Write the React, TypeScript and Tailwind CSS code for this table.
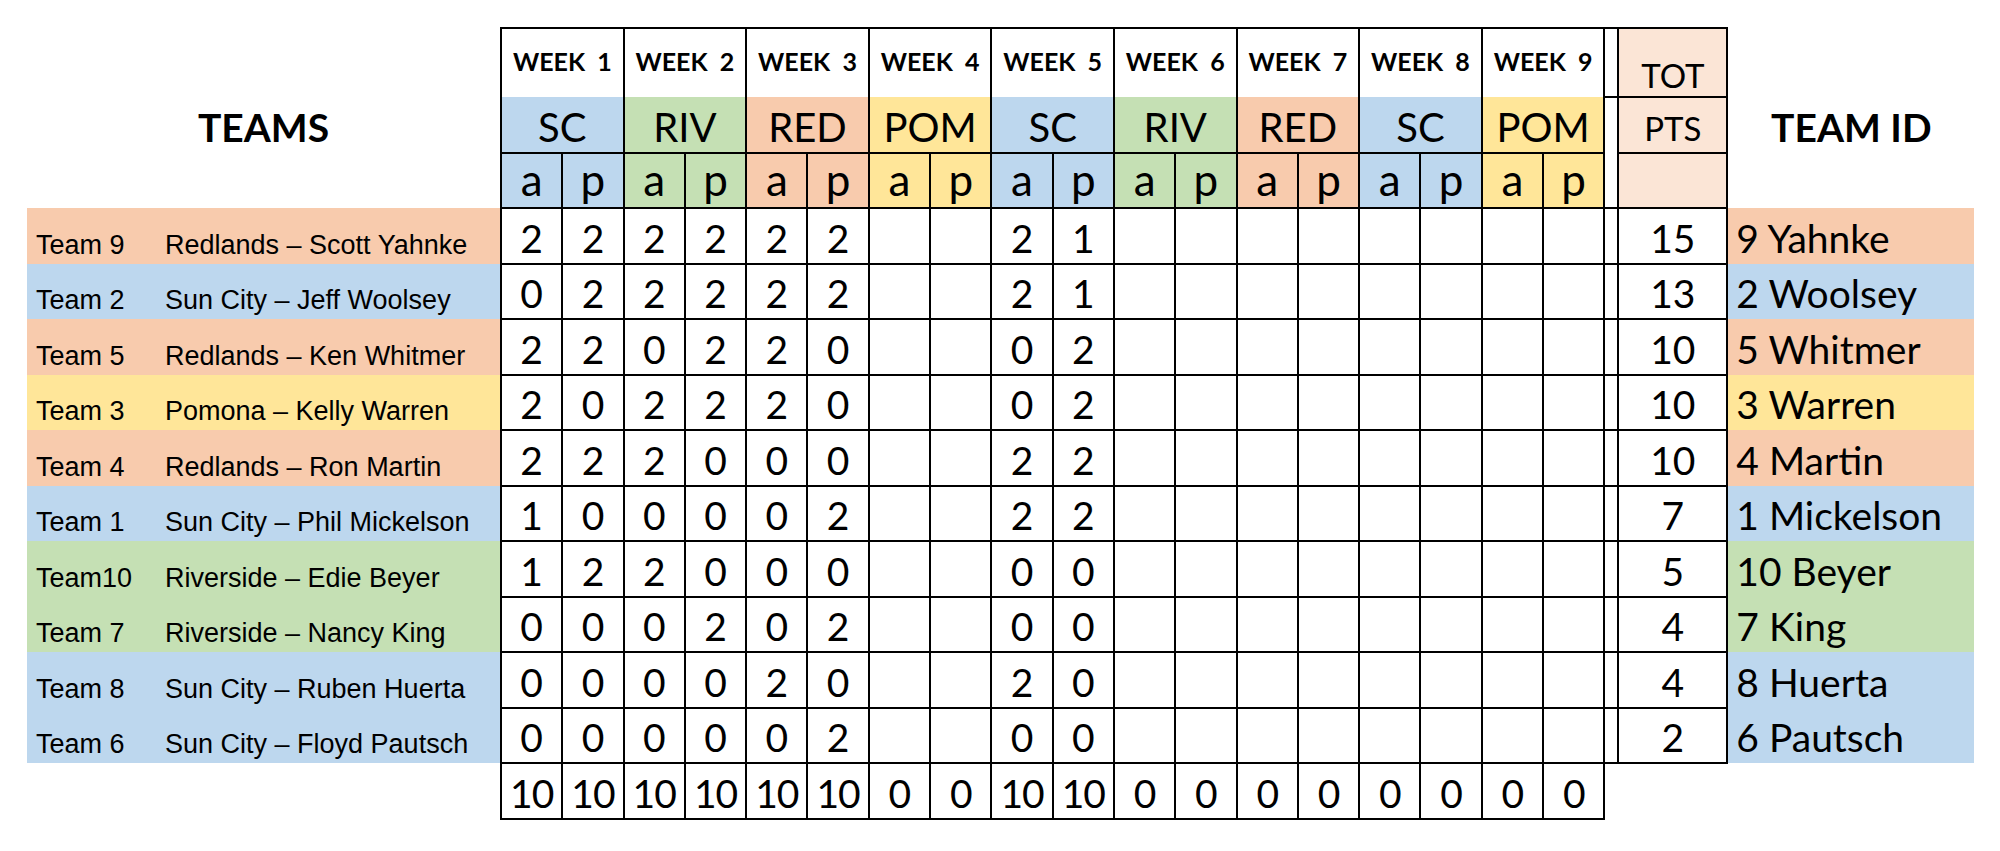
const FILL: Record<string, string> = {
  RED: "bg-[#f8cbad]",
  SC: "bg-[#bdd7ee]",
  RIV: "bg-[#c5e0b4]",
  POM: "bg-[#ffe699]",
};

const weeks = ["SC", "RIV", "RED", "POM", "SC", "RIV", "RED", "SC", "POM"];

const teams = [
  { id: "Team 9", name: "Redlands – Scott Yahnke", club: "RED", scores: "2 2 2 2 2 2 _ _ 2 1", tot: 15, short: "9 Yahnke" },
  { id: "Team 2", name: "Sun City – Jeff Woolsey", club: "SC", scores: "0 2 2 2 2 2 _ _ 2 1", tot: 13, short: "2 Woolsey" },
  { id: "Team 5", name: "Redlands – Ken Whitmer", club: "RED", scores: "2 2 0 2 2 0 _ _ 0 2", tot: 10, short: "5 Whitmer" },
  { id: "Team 3", name: "Pomona – Kelly Warren", club: "POM", scores: "2 0 2 2 2 0 _ _ 0 2", tot: 10, short: "3 Warren" },
  { id: "Team 4", name: "Redlands – Ron Martin", club: "RED", scores: "2 2 2 0 0 0 _ _ 2 2", tot: 10, short: "4 Martin" },
  { id: "Team 1", name: "Sun City – Phil Mickelson", club: "SC", scores: "1 0 0 0 0 2 _ _ 2 2", tot: 7, short: "1 Mickelson" },
  { id: "Team10", name: "Riverside – Edie Beyer", club: "RIV", scores: "1 2 2 0 0 0 _ _ 0 0", tot: 5, short: "10 Beyer" },
  { id: "Team 7", name: "Riverside – Nancy King", club: "RIV", scores: "0 0 0 2 0 2 _ _ 0 0", tot: 4, short: "7 King" },
  { id: "Team 8", name: "Sun City – Ruben Huerta", club: "SC", scores: "0 0 0 0 2 0 _ _ 2 0", tot: 4, short: "8 Huerta" },
  { id: "Team 6", name: "Sun City – Floyd Pautsch", club: "SC", scores: "0 0 0 0 0 2 _ _ 0 0", tot: 2, short: "6 Pautsch" },
];

const totals = ["10", "10", "10", "10", "10", "10", "0", "0", "10", "10", "0", "0", "0", "0", "0", "0", "0", "0"];

function cells(scores: string) {
  const list = scores.split(" ").map((s) => (s === "_" ? "" : s));
  while (list.length < 18) list.push("");
  return list;
}

const calibri = "font-['Lato',sans-serif]";
const arial = "font-['Liberation_Sans',Arial,sans-serif]";

export default function App() {
  return (
    <div className="min-h-[851px] w-[2000px] bg-white text-black">
      <table className={`ml-[27px] mt-[27px] table-fixed border-collapse ${calibri}`}>
        <colgroup>
          <col className="w-[474px]" />
          {Array.from({ length: 18 }).map((_, i) => (
            <col key={i} className="w-[61.3px]" />
          ))}
          <col className="w-[14px]" />
          <col className="w-[109px]" />
          <col className="w-[247px]" />
        </colgroup>
        <tbody>
          {/* Week titles */}
          <tr>
            <td rowSpan={3} className="pt-[18px] text-center align-middle text-[39px] font-bold leading-none">
              TEAMS
            </td>
            {weeks.map((_, i) => (
              <td
                key={i}
                colSpan={2}
                className="h-[69px] whitespace-pre border-x-2 border-t-2 border-black pb-[3px] text-center align-middle text-[25px] font-bold leading-none"
              >
                {`WEEK  ${i + 1}`}
              </td>
            ))}
            <td className="border-2 border-black" />
            <td className="border-2 border-black bg-[#fbe5d6] pb-[4px] text-center align-bottom text-[33px] leading-none">
              TOT
            </td>
            <td rowSpan={3} className="pt-[18px] text-center align-middle text-[39px] font-bold leading-none">
              TEAM ID
            </td>
          </tr>

          {/* Opponent clubs */}
          <tr>
            {weeks.map((w, i) => (
              <td
                key={i}
                colSpan={2}
                className={`h-[56px] border-x-2 border-b-2 border-black pt-[5px] text-center align-middle text-[40px] leading-none ${FILL[w]}`}
              >
                {w}
              </td>
            ))}
            <td className="border-x-2 border-black" />
            <td className="border-2 border-black bg-[#fbe5d6] pt-[7px] text-center align-middle text-[33px] leading-none">
              PTS
            </td>
          </tr>

          {/* a / p */}
          <tr>
            {weeks.flatMap((w, i) =>
              ["a", "p"].map((s) => (
                <td
                  key={`${i}${s}`}
                  className={`h-[55px] border-2 border-black pb-[4px] text-center align-middle text-[44px] leading-none ${FILL[w]}`}
                >
                  {s}
                </td>
              ))
            )}
            <td className="border-x-2 border-black" />
            <td className="border-2 border-black bg-[#fbe5d6]" />
          </tr>

          {teams.map((t) => (
            <tr key={t.id}>
              <td className={`h-[55.5px] align-bottom pb-[5px] pl-[9px] text-[27px] leading-none ${arial} ${FILL[t.club]}`}>
                <div className="flex">
                  <span className="w-[129px]">{t.id}</span>
                  <span>{t.name}</span>
                </div>
              </td>
              {cells(t.scores).map((s, i) => (
                <td key={i} className="border-2 border-black pt-[5px] text-center align-middle text-[39px] leading-none">
                  {s}
                </td>
              ))}
              <td className="border-2 border-black" />
              <td className="border-2 border-black pt-[5px] text-center align-middle text-[39px] leading-none">
                {t.tot}
              </td>
              <td className={`pl-[8px] pt-[5px] align-middle text-[39px] leading-none ${FILL[t.club]}`}>{t.short}</td>
            </tr>
          ))}

          {/* Column totals */}
          <tr>
            <td className="h-[55.5px]" />
            {totals.map((v, i) => (
              <td key={i} className="border-2 border-black pt-[5px] text-center align-middle text-[39px] leading-none tracking-[-1px]">
                {v}
              </td>
            ))}
            <td />
            <td />
            <td />
          </tr>
        </tbody>
      </table>
    </div>
  );
}
